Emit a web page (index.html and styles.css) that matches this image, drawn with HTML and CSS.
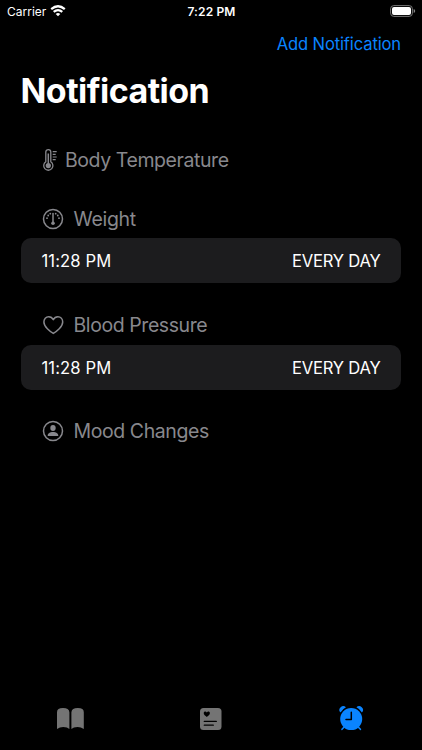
FILE: index.html
```html
<!DOCTYPE html>
<html lang="en">
<head>
<meta charset="utf-8">
<title>Notification</title>
<link rel="stylesheet" href="styles.css">
</head>
<body>
<div class="screen">
  <header class="status">
    <div class="carrier"><span>Carrier</span>
      <svg width="16" height="12" viewBox="0 0 16 12" fill="none" stroke="#fff" stroke-width="2.2"><path d="M1.2 4.2Q8-1.7 14.8 4.2M3.7 6.9Q8 3.3 12.3 6.9"/><path d="M8 11.3 5.7 9Q8 7.1 10.3 9Z" fill="#fff" stroke="none"/></svg>
    </div>
    <div class="clock">7:22 PM</div>
    <svg class="battery" width="26" height="12" viewBox="0 0 26 12"><rect x=".6" y=".6" width="21.8" height="10.8" rx="3.2" fill="none" stroke="#777"/><rect x="2" y="2" width="19" height="8" rx="2" fill="#fff"/><path d="M23.7 4q1.5.7 1.5 2t-1.5 2z" fill="#888"/></svg>
  </header>
  <nav class="actions"><a class="add">Add Notification</a></nav>
  <h1 class="title">Notification</h1>
  <main class="list">
    <section class="group temp">
      <h2 class="heading"><svg width="16" height="24" viewBox="0 0 16 24" fill="none" stroke="currentColor"><path stroke-width="1.3" d="M3.8 13.8V4.1a2.5 2.5 0 0 1 5 0v9.7a4.6 4.6 0 1 1-5 0Z"/><path stroke-width="1.5" d="M6.3 5.5v10"/><circle cx="6.3" cy="17.6" r="2.6" fill="currentColor" stroke="none"/><path stroke-width="1.2" d="M10.7 3.6h4M10.7 6.3h3M10.7 9h4M10.7 11.7h3"/></svg><span class="label">Body Temperature</span></h2>
    </section>
    <section class="group weight">
      <h2 class="heading"><svg width="22" height="22" viewBox="0 0 22 22" fill="none" stroke="currentColor"><circle cx="11" cy="11" r="9.5" stroke-width="1.5"/><path stroke-width="1.5" stroke-linecap="round" d="M11 5.5v8.7"/><circle cx="11" cy="15.2" r="1.8" fill="currentColor" stroke="none"/><g fill="currentColor" stroke="none"><circle cx="5" cy="10.2" r=".9"/><circle cx="6.2" cy="7.5" r=".9"/><circle cx="8.3" cy="5.7" r=".9"/><circle cx="13.7" cy="5.7" r=".9"/><circle cx="15.8" cy="7.5" r=".9"/><circle cx="17" cy="10.2" r=".9"/></g></svg><span class="label">Weight</span></h2>
      <div class="card"><span class="time">11:28 PM</span><span class="repeat">EVERY DAY</span></div>
    </section>
    <section class="group pressure">
      <h2 class="heading"><svg width="22" height="22" viewBox="0 0 22 22" fill="none" stroke="currentColor" stroke-width="1.5" stroke-linejoin="round"><path d="M11.3 19.4C8 17.6 1.9 12.8 1.9 8c0-3.1 2-5.3 4.8-5.3 2.1 0 3.7 1.2 4.6 3 .9-1.8 2.5-3 4.6-3 2.8 0 4.8 2.2 4.8 5.3 0 4.8-6.1 9.6-9.4 11.4Z"/></svg><span class="label">Blood Pressure</span></h2>
      <div class="card"><span class="time">11:28 PM</span><span class="repeat">EVERY DAY</span></div>
    </section>
    <section class="group mood">
      <h2 class="heading"><svg width="22" height="22" viewBox="0 0 22 22"><circle cx="11" cy="11" r="9.5" fill="none" stroke="currentColor" stroke-width="1.5"/><g fill="currentColor"><ellipse cx="11" cy="8" rx="2.7" ry="3"/><path d="M5.7 15.4c0-2 2.3-3.5 5.3-3.5s5.3 1.5 5.3 3.5q0 .6-.7.6H6.4q-.7 0-.7-.6Z"/></g></svg><span class="label">Mood Changes</span></h2>
    </section>
  </main>
  <footer class="tabs">
    <a class="tab"><svg width="40" height="40" viewBox="0 0 40 40" fill="currentColor"><path d="M7 12.2Q7 8 13 8t6.4 4.2v16.9Q17.5 27 13.2 27q-3.4 0-6.2 2.1ZM33.8 12.2Q33.8 8 27.8 8t-6.4 4.2v16.9Q23.3 27 27.6 27q3.4 0 6.2 2.1Z"/></svg></a>
    <a class="tab"><svg width="40" height="40" viewBox="1 0 40 40"><rect x="10" y="8" width="21.5" height="22" rx="3.5" fill="currentColor"/><path fill="#000" d="M16.8 17c-1.5-1-3.1-2.3-3.1-3.9 0-2 2.3-2.2 3.1-.7.8-1.5 3.1-1.3 3.1.7 0 1.6-1.6 2.9-3.1 3.9Z"/><path d="M14.3 21.4h12M14.3 25.2h9" stroke="#000" stroke-width="1.3" stroke-linecap="round"/></svg></a>
    <a class="tab active"><svg width="40" height="40" viewBox="2 0 40 40"><circle cx="21.2" cy="19.1" r="11" fill="currentColor"/><path fill="currentColor" d="M10.5 12.5a3.3 3.3 0 0 1 5.5-5.2q-3.5 1.7-5.5 5.2ZM31.9 12.5a3.3 3.3 0 0 0-5.5-5.2q3.5 1.7 5.5 5.2Z"/><path d="m14.2 27-2.2 2.3M28.2 27l2.2 2.3" stroke="currentColor" stroke-width="1.6" stroke-linecap="round"/><path d="M21.3 12.3v7.2H16" fill="none" stroke="#000" stroke-width="1.5" stroke-linecap="round" stroke-linejoin="round"/></svg></a>
  </footer>
</div>
</body>
</html>
```
FILE: styles.css
```css
* { box-sizing: border-box; }
body { margin: 0; background: #000; color: #fff; font-family: Inter, "Liberation Sans", sans-serif; }
.screen { width: 422px; height: 750px; display: flex; flex-direction: column; overflow: hidden; }
svg { display: block; flex: none; }
.status { height: 22px; flex: none; display: grid; grid-template-columns: 1fr auto 1fr; align-items: center; padding: 0 6px 0 7px; }
.carrier { display: flex; align-items: center; gap: 4px; font-size: 12px; }
.clock { font-size: 12px; font-weight: 600; letter-spacing: .15px; }
.battery { justify-self: end; }
.actions { height: 44px; flex: none; display: flex; align-items: center; justify-content: flex-end; padding-right: 21px; }
.add { color: #0a84ff; font-size: 16.6px; letter-spacing: -.15px; }
.title { margin: 0; height: 50px; flex: none; padding-left: 20.5px; font-size: 34px; line-height: 50px; font-weight: 700; letter-spacing: -.55px; }
.list { flex: 1; padding: 22px 21px 0; }
.group { display: flex; flex-direction: column; }
.heading { margin: 0; height: 44px; display: flex; align-items: center; padding-left: 21px; gap: 9.5px; color: #88888d; font-size: 19.5px; font-weight: 400; letter-spacing: -.42px; }
.temp .heading { gap: 7px; }
.weight { margin-top: 17px; }
.weight .heading { height: 39px; letter-spacing: -.3px; }
.pressure .heading { height: 41px; }
.pressure { margin-top: 21px; }
.mood { margin-top: 19px; }
.card { height: 45px; display: flex; align-items: center; justify-content: space-between; padding: 0 20.5px; border-radius: 10px; background: #1c1c1e; font-size: 16.6px; letter-spacing: -.22px; }
.time { letter-spacing: .1px; }
.tabs { height: 70px; flex: none; display: grid; grid-template-columns: repeat(3, 1fr); justify-items: center; padding-top: 20px; color: #747474; }
.tab { width: 40px; height: 40px; }
.tab.active { color: #0a84ff; }
```
